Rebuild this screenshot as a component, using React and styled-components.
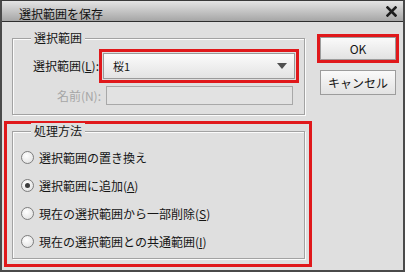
import React from 'react';
import styled, { createGlobalStyle } from 'styled-components';

const Global = createGlobalStyle`
  html, body { margin: 0; padding: 0; background: #dfdfdf; }
  body {
    font-family: "Noto Sans CJK JP", "Noto Sans", sans-serif;
    font-size: 12px;
    color: #151515;
  }
`;

const Window = styled.div`
  width: 405px;
  height: 272px;
  box-sizing: border-box;
  border: 2px solid #4a4a4a;
  border-top: 1px solid #3a3a3a;
  background: #dfdfdf;
  display: flex;
  flex-direction: column;
`;

const TitleBar = styled.div`
  height: 20px;
  flex: none;
  border-bottom: 1px solid #2e2e2e;
  background: linear-gradient(#e4e4e4, #a6a6a6);
  display: flex;
  align-items: center;
  padding: 0 6px 0 17px;
`;

const Title = styled.div`
  flex: 1;
  line-height: 16px;
  padding-top: 5px;
  color: #111;
`;

const Body = styled.div`
  flex: 1;
  display: flex;
`;

const LeftCol = styled.div`
  padding: 16px 0 0 2px;
  display: flex;
  flex-direction: column;
  width: 308px;
`;

const Frame = styled.div`
  position: relative;
  box-sizing: border-box;
  width: 293px;
  height: ${p => p.$h}px;
  margin-left: ${p => p.$ml || 0}px;
  border: 1px solid #a2a2a2;
  box-shadow: inset 1px 1px 0 #fbfbfb, 1px 1px 0 #fbfbfb;
  padding: ${p => p.$pad};
`;

const Legend = styled.div`
  position: absolute;
  top: -9px;
  left: 18px;
  padding: 0 3px;
  line-height: 16px;
  background: #dfdfdf;
`;

const Row = styled.div`
  display: flex;
  align-items: center;
  margin-top: ${p => p.$mt || 0}px;
`;

const Label = styled.div`
  width: ${p => p.$w}px;
  margin-right: ${p => p.$mr}px;
  text-align: ${p => p.$align || 'left'};
  color: ${p => (p.$disabled ? '#a6a6a6' : '#151515')};
  line-height: 16px;
  white-space: nowrap;
`;

const Highlight = styled.div`
  border: 3px solid #e0181b;
  padding: ${p => p.$pad || 0};
  box-sizing: border-box;
  width: ${p => p.$w}px;
  margin-top: ${p => p.$mt || 0}px;
`;

const Select = styled.div`
  height: 26px;
  box-sizing: border-box;
  border: 1px solid #9a9a9a;
  background: linear-gradient(#fbfbfb, #e3e3e3);
  display: flex;
  align-items: center;
  padding: 0 7px 0 9px;
  font-size: 11px;
`;

const SelectText = styled.span`
  flex: 1;
`;

const Input = styled.div`
  width: 187px;
  height: 19px;
  box-sizing: border-box;
  border: 1px solid #a8a8a8;
  background: #e2e2e2;
`;

const RadioList = styled.div`
  display: flex;
  flex-direction: column;
`;

const RadioRow = styled.div`
  height: 28px;
  display: flex;
  align-items: center;
  gap: 5px;
`;

const RadioCircle = styled.span`
  width: 13px;
  height: 13px;
  box-sizing: border-box;
  border-radius: 50%;
  border: 1px solid #7d7d7d;
  background: radial-gradient(circle at 40% 35%, #ffffff, #dcdcdc);
  display: flex;
  align-items: center;
  justify-content: center;
  flex: none;
`;

const RadioDot = styled.span`
  width: 5px;
  height: 5px;
  border-radius: 50%;
  background: #3c3c3c;
`;

const RightCol = styled.div`
  padding: 12px 0 0 5px;
  display: flex;
  flex-direction: column;
`;

const Button = styled.div`
  width: 76px;
  height: ${p => p.$h}px;
  box-sizing: border-box;
  border: 1px solid #9c9c9c;
  background: linear-gradient(#fafafa, #e2e2e2);
  display: flex;
  align-items: center;
  justify-content: center;
  margin-left: ${p => p.$ml || 0}px;
  margin-top: ${p => p.$mt || 0}px;
  color: #151515;
`;

const Close = () => (
  <svg width="11" height="11" viewBox="0 0 11 11">
    <path d="M1.5 1.5 L9.5 9.5 M9.5 1.5 L1.5 9.5" stroke="#1e1e1e" strokeWidth="2.6" strokeLinecap="square" />
  </svg>
);

const Arrow = () => (
  <svg width="10" height="6" viewBox="0 0 10 6">
    <path d="M0 0 H10 L5 6 Z" fill="#505050" />
  </svg>
);

const options = [
  { text: <>選択範囲の置き換え</>, checked: false },
  { text: <>選択範囲に追加(<u>A</u>)</>, checked: true },
  { text: <>現在の選択範囲から一部削除(<u>S</u>)</>, checked: false },
  { text: <>現在の選択範囲との共通範囲(<u>I</u>)</>, checked: false },
];

export default function App() {
  return (
    <>
      <Global />
      <Window>
        <TitleBar>
          <Title>選択範囲を保存</Title>
          <Close />
        </TitleBar>
        <Body>
          <LeftCol>
            <Frame $h={77} $ml={8} $pad="10px 0 0 20px">
              <Legend>選択範囲</Legend>
              <Row>
                <Label $w={64} $mr={2}>選択範囲(<u>L</u>):</Label>
                <Highlight $w={200} $pad="1px">
                  <Select>
                    <SelectText>桜1</SelectText>
                    <Arrow />
                  </Select>
                </Highlight>
              </Row>
              <Row $mt={3}>
                <Label $w={68} $mr={5} $align="right" $disabled>名前(N):</Label>
                <Input />
              </Row>
            </Frame>
            <Highlight $w={308} $mt={6} $pad="7px 4px 5px 5px">
              <Frame $h={128} $pad="11px 0 0 8px">
                <Legend>処理方法</Legend>
                <RadioList>
                  {options.map((o, i) => (
                    <RadioRow key={i}>
                      <RadioCircle>{o.checked && <RadioDot />}</RadioCircle>
                      <span>{o.text}</span>
                    </RadioRow>
                  ))}
                </RadioList>
              </Frame>
            </Highlight>
          </LeftCol>
          <RightCol>
            <Highlight $w={82}>
              <Button $h={23}>OK</Button>
            </Highlight>
            <Button $h={25} $ml={3} $mt={7}>キャンセル</Button>
          </RightCol>
        </Body>
      </Window>
    </>
  );
}
